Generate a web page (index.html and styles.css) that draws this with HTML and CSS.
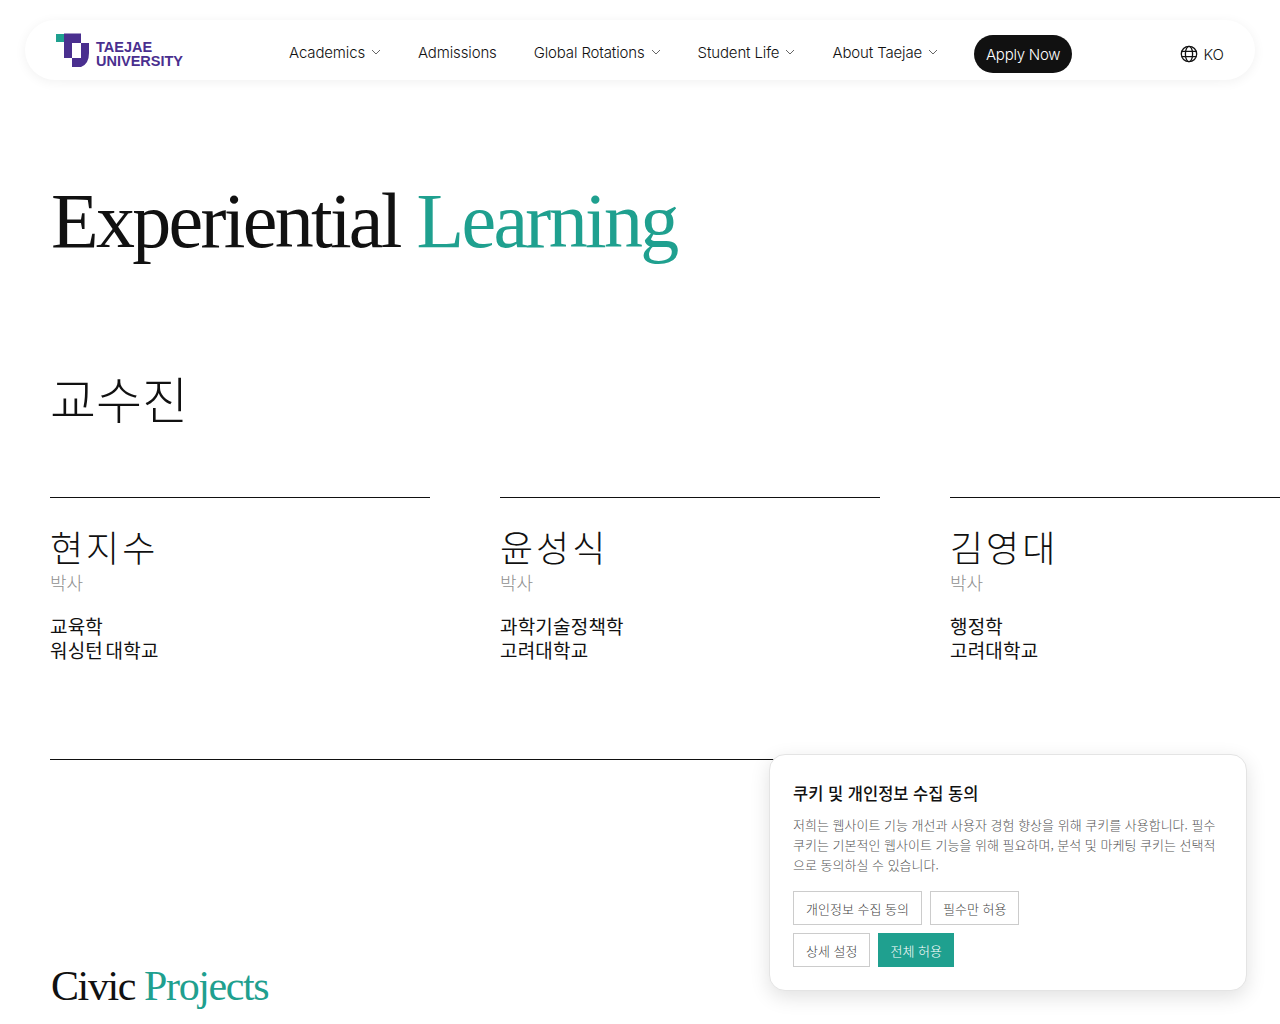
FILE: index.html
```html
<!DOCTYPE html>
<html lang="ko">
<head>
    <meta charset="UTF-8">
    <title>Experiential Learning</title>
    <link rel="stylesheet" href="styles.css">
</head>
<body>
    <header class="site-header">
        <a class="logo" href="#">
            <svg class="logo-mark" width="35" height="35" viewBox="0 0 35 35">
                <rect x="1" y="1" width="8" height="8" fill="#1fa08f"/>
                <path d="M9 0.5 H26 V10 H34 V20 Q34 31 26 34 H17 V25 H9 V9 Q9 5 9 0.5 Z M17 10 V25 H26 V10 Z" fill="#4a2f8f" fill-rule="evenodd"/>
            </svg>
            <span class="logo-text">TAEJAE<br>UNIVERSITY</span>
        </a>
        <nav class="main-nav">
            <a href="#">Academics <svg class="chev" viewBox="0 0 10 6"><path d="M1 1l4 4 4-4"/></svg></a>
            <a href="#">Admissions</a>
            <a href="#">Global Rotations <svg class="chev" viewBox="0 0 10 6"><path d="M1 1l4 4 4-4"/></svg></a>
            <a href="#">Student Life <svg class="chev" viewBox="0 0 10 6"><path d="M1 1l4 4 4-4"/></svg></a>
            <a href="#">About Taejae <svg class="chev" viewBox="0 0 10 6"><path d="M1 1l4 4 4-4"/></svg></a>
        </nav>
        <a class="apply-btn" href="#">Apply Now</a>
        <a class="lang" href="#">
            <svg class="globe" width="18" height="18" viewBox="0 0 18 18">
                <circle cx="9" cy="9" r="7.7"/>
                <ellipse cx="9" cy="9" rx="3.6" ry="7.7"/>
                <path d="M1.8 6.4h14.4M1.8 11.6h14.4"/>
            </svg>
            KO
        </a>
    </header>

    <main class="content">
        <h1 class="page-title">Experiential <span class="accent">Learning</span></h1>

        <section class="faculty">
            <h2 class="section-title">교수진</h2>
            <div class="faculty-grid">
                <div class="faculty-card">
                    <h3>현지수</h3>
                    <p class="degree">박사</p>
                    <p class="field">교육학<br>워싱턴 대학교</p>
                </div>
                <div class="faculty-card">
                    <h3>윤성식</h3>
                    <p class="degree">박사</p>
                    <p class="field">과학기술정책학<br>고려대학교</p>
                </div>
                <div class="faculty-card">
                    <h3>김영대</h3>
                    <p class="degree">박사</p>
                    <p class="field">행정학<br>고려대학교</p>
                </div>
            </div>
            <hr class="rule">
        </section>

        <h2 class="projects-title">Civic <span class="accent">Projects</span></h2>
    </main>

    <aside class="cookie-card">
        <h4>쿠키 및 개인정보 수집 동의</h4>
        <p>저희는 웹사이트 기능 개선과 사용자 경험 향상을 위해 쿠키를 사용합니다. 필수 쿠키는 기본적인 웹사이트 기능을 위해 필요하며, 분석 및 마케팅 쿠키는 선택적으로 동의하실 수 있습니다.</p>
        <div class="cookie-actions">
            <button class="cookie-btn">개인정보 수집 동의</button>
            <button class="cookie-btn">필수만 허용</button>
            <button class="cookie-btn">상세 설정</button>
            <button class="cookie-btn primary">전체 허용</button>
        </div>
    </aside>
</body>
</html>
```

FILE: styles.css
```css
* {
    margin: 0;
    padding: 0;
    box-sizing: border-box;
}

html, body {
    height: 1024px;
    overflow: hidden;
}

body {
    background: #fff;
    color: #111;
    font-family: "Inter", "Noto Sans CJK KR", sans-serif;
    width: 1280px;
}

a {
    color: inherit;
    text-decoration: none;
}

/* Header */
.site-header {
    display: flex;
    align-items: center;
    height: 60px;
    margin: 20px 25px 0;
    padding: 8px 30px 0;
    background: #fff;
    border-radius: 30px;
    box-shadow: 0 2px 12px rgba(0, 0, 0, 0.06);
}

.logo {
    display: flex;
    align-items: center;
    gap: 6px;
    width: 234px;
    margin-top: -8px;
}

.logo-mark {
    flex: none;
}

.logo-text {
    color: #4a2f8f;
    font-family: "Liberation Sans", sans-serif;
    font-size: 14.5px;
    font-weight: 700;
    line-height: 14px;
    margin-top: 7px;
}

.main-nav {
    display: flex;
    gap: 37px;
    width: 649px;
    margin-top: -4px;
}

.main-nav a {
    display: flex;
    align-items: center;
    gap: 6px;
    font-size: 15px;
    font-weight: 300;
    letter-spacing: -0.14px;
    white-space: nowrap;
}

.chev {
    width: 10px;
    height: 6px;
    fill: none;
    stroke: #555;
    stroke-width: 0.9;
}

.apply-btn {
    display: flex;
    align-items: center;
    height: 38px;
    padding: 0 12px;
    margin-left: 36px;
    background: #111;
    color: #fff;
    border-radius: 19px;
    font-size: 15px;
    font-weight: 300;
    letter-spacing: -0.25px;
    white-space: nowrap;
}

.lang {
    display: flex;
    align-items: center;
    gap: 5px;
    margin: 0 1px 0 auto;
    font-size: 15px;
    font-weight: 300;
}

.globe {
    fill: none;
    stroke: #111;
    stroke-width: 1.3;
}

/* Main content */
.content {
    padding-left: 50px;
}

.page-title {
    margin: 96px 0 0 1px;
    font-family: "Liberation Serif", serif;
    font-size: 78px;
    font-weight: 400;
    line-height: 90px;
    letter-spacing: -2.7px;
    white-space: nowrap;
}

.accent {
    color: #1fa08f;
}

.section-title {
    margin-top: 99px;
    font-family: "Noto Sans CJK KR", sans-serif;
    font-size: 50px;
    font-weight: 300;
    line-height: 64px;
}

.faculty-grid {
    display: grid;
    grid-template-columns: repeat(3, 380px);
    gap: 70px;
    margin-top: 68px;
}

.faculty-card {
    border-top: 1px solid #111;
    padding-top: 24px;
    height: 262px;
}

.faculty-card h3 {
    font-family: "Noto Sans CJK KR", sans-serif;
    font-size: 36px;
    font-weight: 300;
    line-height: 48px;
    letter-spacing: 3px;
}

.degree {
    color: #8f8f8f;
    font-family: "Noto Sans CJK KR", sans-serif;
    font-size: 18px;
    font-weight: 300;
    line-height: 24px;
}

.field {
    margin-top: 20px;
    font-family: "Noto Sans CJK KR", sans-serif;
    font-size: 19px;
    font-weight: 400;
    line-height: 24px;
    letter-spacing: 0.2px;
    word-spacing: -3px;
}

.rule {
    border: none;
    border-top: 1px solid #111;
    width: 1180px;
}

.projects-title {
    margin: 199px 0 0 1px;
    font-family: "Liberation Serif", serif;
    font-size: 42px;
    font-weight: 400;
    line-height: 54px;
    letter-spacing: -1.4px;
}

/* Cookie dialog */
.cookie-card {
    position: absolute;
    left: 769px;
    top: 754px;
    width: 478px;
    height: 237px;
    padding: 24px 23px 0;
    background: #fff;
    border: 1px solid #e4e4e4;
    border-radius: 16px;
    box-shadow: 0 6px 20px rgba(0, 0, 0, 0.12);
    font-family: "Noto Sans CJK KR", sans-serif;
}

.cookie-card h4 {
    font-size: 16.5px;
    font-weight: 500;
    line-height: 28px;
}

.cookie-card p {
    margin-top: 8px;
    color: #555;
    font-size: 13px;
    font-weight: 300;
    line-height: 20px;
}

.cookie-actions {
    display: flex;
    flex-wrap: wrap;
    gap: 8px;
    margin-top: 16px;
    width: 300px;
}

.cookie-btn {
    height: 34px;
    padding: 0 12px;
    background: #fff;
    border: 1px solid #ccc;
    color: #444;
    font-family: inherit;
    font-size: 13px;
    font-weight: 300;
}

.cookie-btn.primary {
    background: #1fa08f;
    border: none;
    color: #fff;
}
```
